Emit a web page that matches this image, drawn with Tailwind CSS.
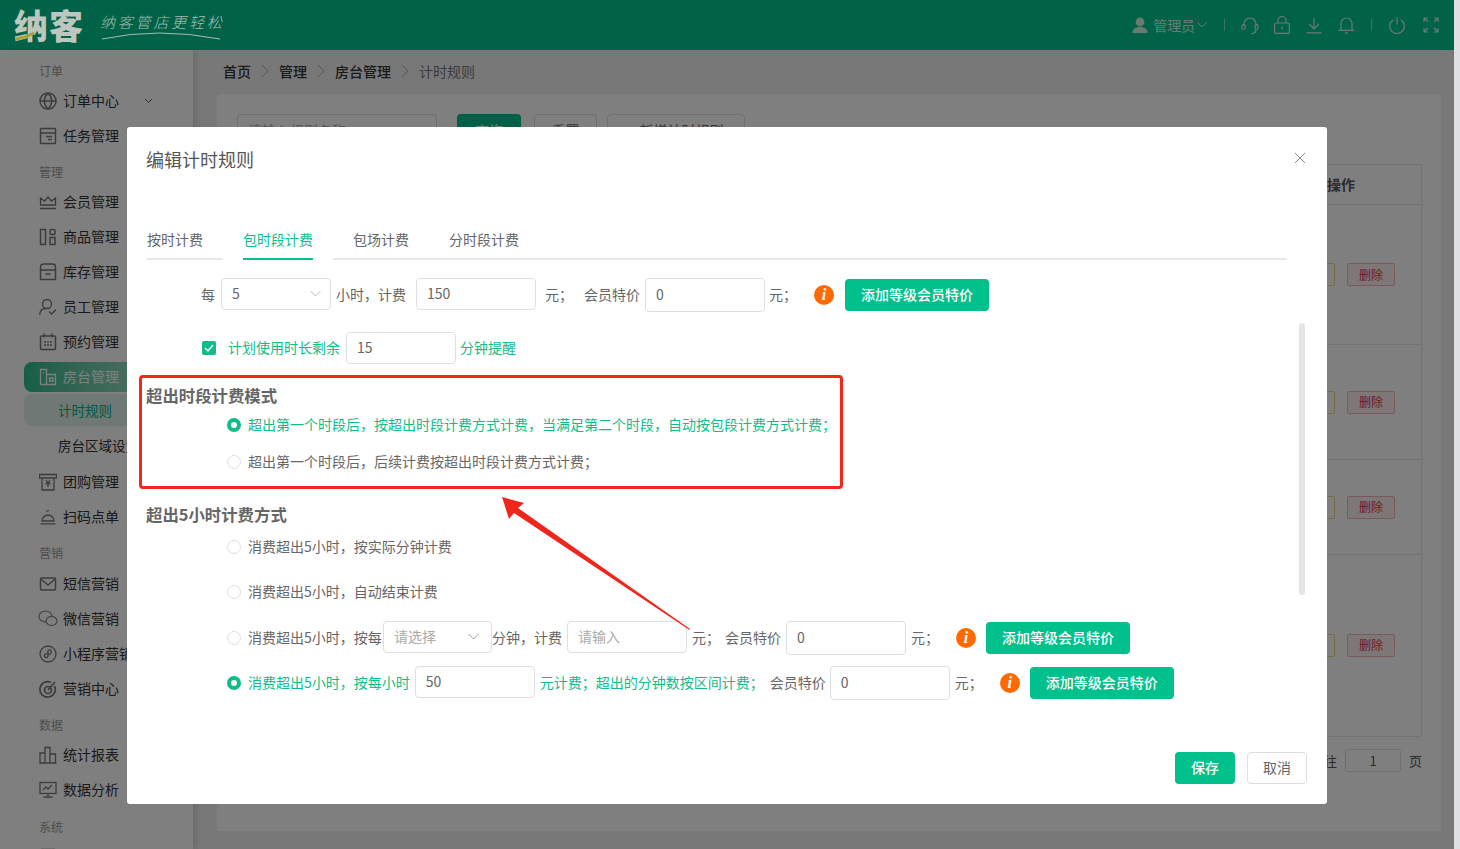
<!doctype html>
<html lang="zh-CN">
<head>
  <meta charset="utf-8" />
  <title>编辑计时规则</title>
  <script src="https://cdn.jsdelivr.net/npm/@tailwindcss/browser@4"></script>
</head>
<body class="bg-[#dfe0e4] overflow-hidden font-['Noto_Sans_CJK_SC',sans-serif]">
<div class="relative w-[1460px] h-[849px] overflow-hidden">
  <!-- App behind the dialog -->
  <div class="w-[1454px] h-[849px] flex flex-col bg-[#f0f0f0]">
    <header class="h-[50px] shrink-0 bg-[#00c78f] flex items-center text-white">
      <!-- logo stays bright over the dim layer -->
      <div class="relative z-10 w-[230px] h-[50px] shrink-0">
        <span class="absolute left-[14px] top-[1px] text-[34px] leading-[48px] font-black tracking-[1px] text-[#bdc6bf]">纳客</span>
        <svg class="absolute left-[12px] top-[30px]" width="30" height="12" viewBox="0 0 30 12" fill="none"><path d="M3 9 Q12 8 22 3" stroke="#a8a030" stroke-width="3"/></svg>
        <span class="absolute left-[100px] top-[10px] text-[15px] leading-[24px] tracking-[2.8px] italic font-light text-[#a8bdb2]">纳客管店更轻松</span>
        <svg class="absolute left-[100px] top-[30px]" width="124" height="12" viewBox="0 0 124 12" fill="none"><path d="M2 9 Q58 -3 120 9" stroke="#a8bdb2" stroke-width="1"/></svg>
      </div>
      <div class="ml-auto flex items-center h-full pr-[15px] text-[#d7f3ea]">
        <svg width="16" height="17" viewBox="0 0 16 17" fill="currentColor"><circle cx="8" cy="5" r="4.4"/><path d="M0.5 16c0-4 3-6 7.500-6s7.500 2 7.500 6z"/></svg>
        <span class="ml-[5px] text-[14px] tracking-[-0.1px]">管理员</span>
        <svg class="ml-[2px]" width="10" height="6" viewBox="0 0 10 6" fill="none" stroke="currentColor"><path d="M0.500 0.500 5 5 9.500 0.500"/></svg>
        <div class="ml-[17px] w-px h-[12px] bg-[#d7f3ea]/60"></div>
        <svg class="ml-[16px]" width="18" height="19" viewBox="0 0 18 19" fill="none" stroke="currentColor" stroke-width="1.200"><path d="M3 10V8a6 6 0 0 1 12 0v2"/><rect x="1" y="8.500" width="3" height="5" rx="1.500"/><rect x="14" y="8.500" width="3" height="5" rx="1.500"/><path d="M15 13.500c0 2.500-2 4-5 4"/></svg>
        <svg class="ml-[15px]" width="16" height="18" viewBox="0 0 16 18" fill="none" stroke="currentColor" stroke-width="1.200"><rect x="0.600" y="7" width="14.800" height="10.400" rx="1"/><path d="M4 7V4.500a4 4 0 0 1 8 0V7M8 10.500v3"/></svg>
        <svg class="ml-[16px]" width="16" height="17" viewBox="0 0 16 17" fill="none" stroke="currentColor" stroke-width="1.200"><path d="M8 1v10M3 7l5 5 5-5M0.500 15.800h15"/></svg>
        <svg class="ml-[16px]" width="17" height="18" viewBox="0 0 17 18" fill="none" stroke="currentColor" stroke-width="1.200"><path d="M3 14V7.500a5.500 5.500 0 0 1 11 0V14M0.500 14.400h16M7 16.800h3"/></svg>
        <div class="ml-[16px] w-px h-[12px] bg-[#d7f3ea]/60"></div>
        <svg class="ml-[17px]" width="16" height="17" viewBox="0 0 16 17" fill="none" stroke="currentColor" stroke-width="1.200"><path d="M8 0.500v7M4.500 2.800a7.300 7.300 0 1 0 7 0"/></svg>
        <svg class="ml-[18px]" width="16" height="16" viewBox="0 0 16 16" fill="none" stroke="currentColor" stroke-width="1.200"><path d="M1 5V1h4M1 1l4 4M15 5V1h-4M15 1l-4 4M1 11v4h4M1 15l4-4M15 11v4h-4M15 15l-4-4"/></svg>
      </div>
    </header>

    <div class="flex flex-1 min-h-0">
      <!-- Sidebar -->
      <aside class="w-[193px] shrink-0 bg-white pt-[8px] pl-[39px] shadow-[3px_0_6px_rgba(0,0,0,0.12)] text-[14px] text-[#333] overflow-hidden">
        <div class="h-[25px] flex items-center text-[12px] text-[#999]">订单</div>
        <div class="h-[35px] flex items-center gap-[6px]">
          <svg class="w-[18px] h-[18px] shrink-0" viewBox="0 0 18 18" fill="none" stroke="#777" stroke-width="1.500"><circle cx="9" cy="9" r="8"/><path d="M1 9h16M9 1c-5 5-5 11 0 16M9 1c5 5 5 11 0 16"/></svg>
          订单中心
          <svg class="ml-[19px]" width="9" height="6" viewBox="0 0 9 6" fill="none" stroke="#555"><path d="M1 1l3.500 3.500L8 1"/></svg>
        </div>
        <div class="h-[35px] flex items-center gap-[6px]">
          <svg class="w-[18px] h-[18px] shrink-0" viewBox="0 0 18 18" fill="none" stroke="#777" stroke-width="1.500"><rect x="1.500" y="1.500" width="15" height="15" rx="1"/><path d="M1.500 6h15M7 9.500h6M9 12.500h4"/></svg>
          任务管理
        </div>
        <div class="mt-[6px] h-[25px] flex items-center text-[12px] text-[#999]">管理</div>
        <div class="h-[35px] flex items-center gap-[6px]">
          <svg class="w-[18px] h-[18px] shrink-0" viewBox="0 0 18 18" fill="none" stroke="#777" stroke-width="1.300"><path d="M1.500 12V5l4 3 3.500-4 3.500 4 4-3v7zM1 15.500h16"/></svg>
          会员管理
        </div>
        <div class="h-[35px] flex items-center gap-[6px]">
          <svg class="w-[18px] h-[18px] shrink-0" viewBox="0 0 18 18" fill="none" stroke="#777" stroke-width="1.500"><rect x="1.500" y="1.500" width="5" height="15"/><rect x="11" y="1.500" width="5" height="5" rx="1"/><rect x="11" y="9.500" width="5" height="7"/></svg>
          商品管理
        </div>
        <div class="h-[35px] flex items-center gap-[6px]">
          <svg class="w-[18px] h-[18px] shrink-0" viewBox="0 0 18 18" fill="none" stroke="#777" stroke-width="1.500"><path d="M1.500 7V4a3 3 0 0 1 3-3h9a3 3 0 0 1 3 3v3M1.500 7h15v9.500h-15zM6.500 11h5"/></svg>
          库存管理
        </div>
        <div class="h-[35px] flex items-center gap-[6px]">
          <svg class="w-[18px] h-[18px] shrink-0" viewBox="0 0 18 18" fill="none" stroke="#777" stroke-width="1.300"><circle cx="8" cy="6" r="4.500"/><path d="M0.800 17c0-4 2.500-6.500 6.200-6.500M10 13.500l2.500 2.500 4.500-4.500"/></svg>
          员工管理
        </div>
        <div class="h-[35px] flex items-center gap-[6px]">
          <svg class="w-[18px] h-[18px] shrink-0" viewBox="0 0 18 18" fill="none" stroke="#777" stroke-width="1.500"><rect x="1.500" y="3" width="15" height="13.500" rx="1"/><path d="M5 0.500v4M13 0.500v4M5 9h2M8 9h2M11 9h2M5 12h2M8 12h2M11 12h2"/></svg>
          预约管理
        </div>
        <div class="mt-[3px] mb-[2px] h-[30px] -ml-[15px] pl-[15px] pb-[1px] flex items-center gap-[6px] rounded-l-[8px] bg-gradient-to-r from-[#27bd90] to-[#b9e6d6] text-white">
          <svg class="w-[18px] h-[18px] shrink-0" viewBox="0 0 18 18" fill="none" stroke="#fff" stroke-width="1.300"><path d="M1.500 16.500V1.500h6v15M7.500 6.500h9v10h-15M4 5h1M10.500 10h3.500v3h-3.500z"/></svg>
          房台管理
        </div>
        <div class="mt-[1px] h-[32px] -ml-[15px] pl-[34px] flex items-center rounded-l-[8px] bg-[#dff1ea] text-[13.500px] text-[#00b07f]">计时规则</div>
        <div class="h-[38px] pl-[19px] flex items-center whitespace-nowrap text-[#333] text-[13.500px]">房台区域设置</div>
        <div class="h-[35px] flex items-center gap-[6px]">
          <svg class="w-[18px] h-[18px] shrink-0" viewBox="0 0 18 18" fill="none" stroke="#777" stroke-width="1.300"><path d="M0.500 1.500h17v3.500h-17zM3 5v12h12V5M7 7.500l2 2.500 2-2.500M6.500 10.500h5M9 10v4"/></svg>
          团购管理
        </div>
        <div class="h-[35px] flex items-center gap-[6px]">
          <svg class="w-[18px] h-[18px] shrink-0" viewBox="0 0 18 18" fill="none" stroke="#777" stroke-width="1.300"><path d="M3 13a6 6 0 0 1 12 0zM7 3.500l3-1M1.500 15.800h15"/></svg>
          扫码点单
        </div>
        <div class="mt-[6px] h-[26px] pb-[1px] flex items-center text-[12px] text-[#999]">营销</div>
        <div class="h-[35px] flex items-center gap-[6px]">
          <svg class="w-[18px] h-[18px] shrink-0" viewBox="0 0 18 18" fill="none" stroke="#777" stroke-width="1.500"><rect x="1.500" y="3" width="15" height="12" rx="1.500"/><path d="M2 4l7 6 7-6"/></svg>
          短信营销
        </div>
        <div class="h-[35px] flex items-center gap-[6px]">
          <svg class="w-[20px] h-[18px] shrink-0 -ml-[1px] -mr-[1px]" viewBox="0 0 20 18" fill="none" stroke="#777" stroke-width="1.100"><ellipse cx="7.500" cy="6.500" rx="6.500" ry="5.500"/><ellipse cx="13.500" cy="11" rx="5.500" ry="4.500" fill="#fff"/></svg>
          微信营销
        </div>
        <div class="h-[35px] flex items-center gap-[6px] whitespace-nowrap">
          <svg class="w-[18px] h-[18px] shrink-0" viewBox="0 0 18 18" fill="none" stroke="#777" stroke-width="1.300"><circle cx="9" cy="9" r="8"/><path d="M6 12c-2-2 1-4 3-3s4-1 3-3-4-1-3 1v4c0 2-2 2-3 1z"/></svg>
          小程序营销
        </div>
        <div class="h-[35px] flex items-center gap-[6px]">
          <svg class="w-[18px] h-[18px] shrink-0" viewBox="0 0 18 18" fill="none" stroke="#777" stroke-width="1.700"><path d="M15.500 6A7.700 7.700 0 1 1 12 2.500"/><circle cx="9" cy="10" r="3.500"/><path d="M9 10l7-8"/></svg>
          营销中心
        </div>
        <div class="mt-[6px] h-[25px] flex items-center text-[12px] text-[#999]">数据</div>
        <div class="h-[35px] flex items-center gap-[6px]">
          <svg class="w-[18px] h-[18px] shrink-0" viewBox="0 0 18 18" fill="none" stroke="#777" stroke-width="1.300"><path d="M1 17V7h5v10M6 17V1.500h5V17M11 17V8h5.500v9zM0.500 17h17"/></svg>
          统计报表
        </div>
        <div class="h-[35px] flex items-center gap-[6px]">
          <svg class="w-[18px] h-[18px] shrink-0" viewBox="0 0 18 18" fill="none" stroke="#777" stroke-width="1.300"><rect x="1" y="1.500" width="16" height="11"/><path d="M4 9l3-3 2 2 4-4M9 12.500v3M4.500 16h9"/></svg>
          数据分析
        </div>
        <div class="mt-[7px] h-[25px] flex items-center text-[12px] text-[#999]">系统</div>
        <div class="h-[35px] flex items-center gap-[6px]">
          <svg class="w-[18px] h-[18px] shrink-0" viewBox="0 0 18 18" fill="none" stroke="#777" stroke-width="1.500"><rect x="1.500" y="1.500" width="15" height="15" rx="1"/></svg>
        </div>
      </aside>

      <!-- Main -->
      <main class="flex-1 min-w-0 pl-[24px] pr-[13px]">
        <nav class="h-[44px] pl-[6px] pb-[2px] flex items-center text-[14px] text-[#333] font-medium">
          首页
          <svg class="mx-[10px]" width="8" height="14" viewBox="0 0 8 14" fill="none" stroke="#aaa"><path d="M1 1l6 6-6 6"/></svg>
          管理
          <svg class="mx-[10px]" width="8" height="14" viewBox="0 0 8 14" fill="none" stroke="#aaa"><path d="M1 1l6 6-6 6"/></svg>
          房台管理
          <svg class="mx-[10px]" width="8" height="14" viewBox="0 0 8 14" fill="none" stroke="#aaa"><path d="M1 1l6 6-6 6"/></svg>
          <span class="font-normal text-[#777]">计时规则</span>
        </nav>
        <section class="h-[737px] bg-white rounded-t-[4px] pt-[20px] pl-[20px] pr-[19px] text-[14px] text-[#666]">
          <div class="flex h-[32px] gap-[13px]">
            <div class="w-[200px] border border-[#ddd] rounded-[4px] px-[10px] flex items-center text-[#aaa] mr-[7px]">请输入规则名称</div>
            <div class="w-[64px] bg-[#00c08b] rounded-[4px] text-white flex items-center justify-center">查询</div>
            <div class="w-[63px] border border-[#ddd] rounded-[4px] flex items-center justify-center">重置</div>
            <div class="w-[138px] -ml-[3px] border border-[#ddd] rounded-[4px] flex items-center justify-center">+ 新增计时规则</div>
          </div>
          <div class="mt-[18px] border border-[#e6e6e6] h-[573px]">
            <div class="h-[40px] border-b border-[#e6e6e6] flex items-center justify-end pr-[66px] font-bold text-[#555]">操作</div>
            <div class="h-[140px] border-b border-[#e6e6e6] flex items-center justify-end pr-[26px] gap-[12px] text-[12px]">
              <div class="w-[48px] h-[23px] border border-[#e6d98a] rounded-[2px]"></div>
              <div class="w-[48px] h-[23px] border border-[#f3b4b4] bg-[#fdeeee] rounded-[2px] text-[#d33] flex items-center justify-center">删除</div>
            </div>
            <div class="h-[115px] border-b border-[#e6e6e6] flex items-center justify-end pr-[26px] gap-[12px] text-[12px]">
              <div class="w-[48px] h-[23px] border border-[#e6d98a] rounded-[2px]"></div>
              <div class="w-[48px] h-[23px] border border-[#f3b4b4] bg-[#fdeeee] rounded-[2px] text-[#d33] flex items-center justify-center">删除</div>
            </div>
            <div class="h-[95px] border-b border-[#e6e6e6] flex items-center justify-end pr-[26px] gap-[12px] text-[12px]">
              <div class="w-[48px] h-[23px] border border-[#e6d98a] rounded-[2px]"></div>
              <div class="w-[48px] h-[23px] border border-[#f3b4b4] bg-[#fdeeee] rounded-[2px] text-[#d33] flex items-center justify-center">删除</div>
            </div>
            <div class="h-[180px] flex items-center justify-end pr-[26px] gap-[12px] text-[12px]">
              <div class="w-[48px] h-[23px] border border-[#e6d98a] rounded-[2px]"></div>
              <div class="w-[48px] h-[23px] border border-[#f3b4b4] bg-[#fdeeee] rounded-[2px] text-[#d33] flex items-center justify-center">删除</div>
            </div>
          </div>
          <div class="mt-[12px] h-[23px] flex items-center justify-end text-[#555] text-[13px]">
            前往
            <div class="ml-[8px] w-[56px] h-[23px] border border-[#ddd] rounded-[3px] flex items-center justify-center">1</div>
            <span class="ml-[8px]">页</span>
          </div>
        </section>
      </main>
    </div>
  </div>

  <!-- Dim layer -->
  <div class="absolute left-0 top-0 w-[1454px] h-[849px] bg-black/50"></div>

  <!-- Dialog -->
  <div class="absolute z-20 left-[127px] top-[127px] w-[1200px] h-[677px] bg-white rounded-[3px] flex flex-col text-[14px] text-[#666]">
    <div class="h-[66px] shrink-0 pl-[19px] pb-[2px] flex items-center text-[18px] text-[#555]">编辑计时规则</div>
    <svg class="absolute left-[1167px] top-[25px]" width="12" height="12" viewBox="0 0 12 12" fill="none" stroke="#888"><path d="M1 1l10 10M11 1L1 11"/></svg>

    <!-- Tabs -->
    <div class="mt-[29px] ml-[20px] w-[1140px] h-[38px] shrink-0 flex">
      <div class="w-[76px] h-full border-b-2 border-[#e6e8ea] pb-[2px] flex items-center">按时计费</div>
      <div class="mx-[20px] w-[70px] h-full border-b-2 border-[#10bd8a] pb-[2px] text-[#10bd8a] flex items-center justify-center">包时段计费</div>
      <div class="flex-1 h-full border-b-2 border-[#e6e8ea] pb-[2px] pl-[20px] flex items-center gap-[40px]">
        <span>包场计费</span><span>分时段计费</span>
      </div>
    </div>

    <!-- Row 1 -->
    <div class="mt-[18px] h-[34px] shrink-0 pl-[74px] flex items-center whitespace-nowrap">
      <span class="pb-[2px]">每</span>
      <div class="self-start ml-[6px] w-[110px] h-[32px] border border-[#dcdfe6] rounded-[4px] pl-[10px] pr-[9px] pb-[2px] flex items-center justify-between">
        5
        <svg width="11" height="7" viewBox="0 0 11 7" fill="none" stroke="#bbb"><path d="M0.500 1l5 5 5-5"/></svg>
      </div>
      <span class="ml-[5px] pb-[2px]">小时&#xFF0C;计费</span>
      <input class="self-start ml-[10px] w-[120px] h-[32px] border border-[#dcdfe6] rounded-[4px] px-[10px] pb-[2px] text-[14px] text-[#666]" value="150" />
      <span class="ml-[9px] pb-[2px]">元&#xFF1B;</span>
      <span class="ml-[11px] pb-[2px]">会员特价</span>
      <input class="ml-[5px] w-[120px] h-[34px] border border-[#dcdfe6] rounded-[4px] px-[10px] pb-[2px] text-[14px] text-[#666]" value="0" />
      <span class="ml-[4px] pb-[2px]">元&#xFF1B;</span>
      <div class="ml-[17px] w-[20px] h-[20px] rounded-full bg-[#ff6a00] text-white flex items-center justify-center font-['Liberation_Serif',serif] italic font-bold text-[16px]">i</div>
      <div class="ml-[11px] w-[144px] h-[32px] bg-[#00c08b] rounded-[4px] text-white font-medium pb-[2px] flex items-center justify-center">添加等级会员特价</div>
    </div>

    <!-- Row 2 -->
    <div class="mt-[20px] h-[32px] shrink-0 pl-[75px] flex items-center whitespace-nowrap text-[#10bd8a]">
      <div class="w-[14px] h-[14px] rounded-[2px] bg-[#10bd8a] flex items-center justify-center">
        <svg width="10" height="8" viewBox="0 0 10 8" fill="none" stroke="#fff" stroke-width="1.400"><path d="M1 4l3 3 5-6"/></svg>
      </div>
      <span class="ml-[12px] pb-[2px]">计划使用时长剩余</span>
      <input class="ml-[6px] w-[110px] h-[32px] border border-[#dcdfe6] rounded-[4px] px-[10px] pb-[2px] text-[14px] text-[#666]" value="15" />
      <span class="ml-[4px] pb-[2px]">分钟提醒</span>
    </div>

    <!-- Overflow mode -->
    <h3 class="mt-[20px] h-[24px] shrink-0 pl-[19px] pb-[2px] flex items-center text-[16.400px] font-bold text-[#666]">超出时段计费模式</h3>
    <div class="mt-[5px] h-[24px] shrink-0 pl-[100px] flex items-center whitespace-nowrap text-[#10bd8a]">
      <div class="w-[14px] h-[14px] rounded-full border-[4px] border-[#10bd8a] bg-white"></div>
      <span class="ml-[7px] pb-[2px]">超出第一个时段后&#xFF0C;按超出时段计费方式计费&#xFF0C;当满足第二个时段&#xFF0C;自动按包段计费方式计费&#xFF1B;</span>
    </div>
    <div class="mt-[13px] h-[24px] shrink-0 pl-[100px] flex items-center whitespace-nowrap">
      <div class="w-[14px] h-[14px] rounded-full border border-[#dcdfe6]"></div>
      <span class="ml-[7px] pb-[2px]">超出第一个时段后&#xFF0C;后续计费按超出时段计费方式计费&#xFF1B;</span>
    </div>

    <!-- Over 5 hours -->
    <h3 class="mt-[29px] h-[24px] shrink-0 pl-[19px] pb-[2px] flex items-center text-[16.400px] font-bold text-[#666]">超出5小时计费方式</h3>
    <div class="mt-[8px] h-[24px] shrink-0 pl-[100px] flex items-center">
      <div class="w-[14px] h-[14px] rounded-full border border-[#dcdfe6]"></div>
      <span class="ml-[7px] pb-[2px]">消费超出5小时&#xFF0C;按实际分钟计费</span>
    </div>
    <div class="mt-[21px] h-[24px] shrink-0 pl-[100px] flex items-center">
      <div class="w-[14px] h-[14px] rounded-full border border-[#dcdfe6]"></div>
      <span class="ml-[7px] pb-[2px]">消费超出5小时&#xFF0C;自动结束计费</span>
    </div>

    <div class="mt-[17px] h-[34px] shrink-0 pl-[100px] flex items-center whitespace-nowrap">
      <div class="w-[14px] h-[14px] rounded-full border border-[#dcdfe6]"></div>
      <span class="ml-[7px] w-[135px] pb-[2px]">消费超出5小时&#xFF0C;按每</span>
      <div class="self-start w-[109px] h-[32px] border border-[#dcdfe6] rounded-[4px] pl-[10px] pr-[12px] pb-[2px] flex items-center justify-between text-[#aaa]">
        请选择
        <svg width="11" height="7" viewBox="0 0 11 7" fill="none" stroke="#999"><path d="M0.500 1l5 5 5-5"/></svg>
      </div>
      <span class="w-[70px] text-right pb-[2px]">分钟&#xFF0C;计费</span>
      <input class="self-start ml-[5px] w-[120px] h-[32px] border border-[#dcdfe6] rounded-[4px] px-[10px] pb-[2px] text-[14px] placeholder:text-[#aaa]" placeholder="请输入" />
      <span class="ml-[5px] pb-[2px]">元&#xFF1B;</span>
      <span class="ml-[5px] pb-[2px]">会员特价</span>
      <input class="ml-[5px] w-[120px] h-[34px] border border-[#dcdfe6] rounded-[4px] px-[10px] pb-[2px] text-[14px] text-[#666]" value="0" />
      <span class="ml-[5px] pb-[2px]">元&#xFF1B;</span>
      <div class="ml-[17px] w-[20px] h-[20px] rounded-full bg-[#ff6a00] text-white flex items-center justify-center font-['Liberation_Serif',serif] italic font-bold text-[16px]">i</div>
      <div class="ml-[10px] w-[144px] h-[32px] bg-[#00c08b] rounded-[4px] text-white font-medium pb-[2px] flex items-center justify-center">添加等级会员特价</div>
    </div>

    <div class="mt-[11px] h-[34px] shrink-0 pl-[100px] flex items-center whitespace-nowrap">
      <div class="w-[14px] h-[14px] rounded-full border-[4px] border-[#10bd8a] bg-white"></div>
      <span class="ml-[7px] pb-[2px] text-[#10bd8a]">消费超出5小时&#xFF0C;按每小时</span>
      <input class="self-start ml-[5px] w-[120px] h-[32px] border border-[#dcdfe6] rounded-[4px] px-[10px] pb-[2px] text-[14px] text-[#666]" value="50" />
      <span class="ml-[5px] pb-[2px] text-[#10bd8a]">元计费&#xFF1B;超出的分钟数按区间计费&#xFF1B;</span>
      <span class="ml-[6px] pb-[2px]">会员特价</span>
      <input class="ml-[4px] w-[120px] h-[34px] border border-[#dcdfe6] rounded-[4px] px-[10px] pb-[2px] text-[14px] text-[#666]" value="0" />
      <span class="ml-[5px] pb-[2px]">元&#xFF1B;</span>
      <div class="ml-[17px] w-[20px] h-[20px] rounded-full bg-[#ff6a00] text-white flex items-center justify-center font-['Liberation_Serif',serif] italic font-bold text-[16px]">i</div>
      <div class="ml-[10px] w-[144px] h-[32px] bg-[#00c08b] rounded-[4px] text-white font-medium pb-[2px] flex items-center justify-center">添加等级会员特价</div>
    </div>

    <!-- Footer -->
    <div class="mt-auto mb-[20px] pr-[20px] flex justify-end gap-[12px]">
      <div class="w-[60px] h-[32px] bg-[#00c08b] rounded-[4px] text-white font-medium pb-[2px] flex items-center justify-center">保存</div>
      <div class="w-[60px] h-[32px] border border-[#dcdfe6] rounded-[4px] pb-[2px] flex items-center justify-center">取消</div>
    </div>

    <!-- Dialog scrollbar -->
    <div class="absolute left-[1172px] top-[196px] w-[6px] h-[272px] rounded-full bg-[#e4e5e7]"></div>

    <!-- Annotation over the dialog -->
    <div class="absolute left-[12px] top-[248px] w-[704px] h-[114px] border-[3px] border-[#f5261c] rounded-[4px]"></div>
    <svg class="absolute left-[0px] top-[0px] pointer-events-none" width="1200" height="677" viewBox="0 0 1200 677" fill="none">
      <polygon points="375,370 397,376 391,381 563,502 562.500,503 387,386 382,392" fill="#f0261c"/>
    </svg>
  </div>
</div>
</body>
</html>
